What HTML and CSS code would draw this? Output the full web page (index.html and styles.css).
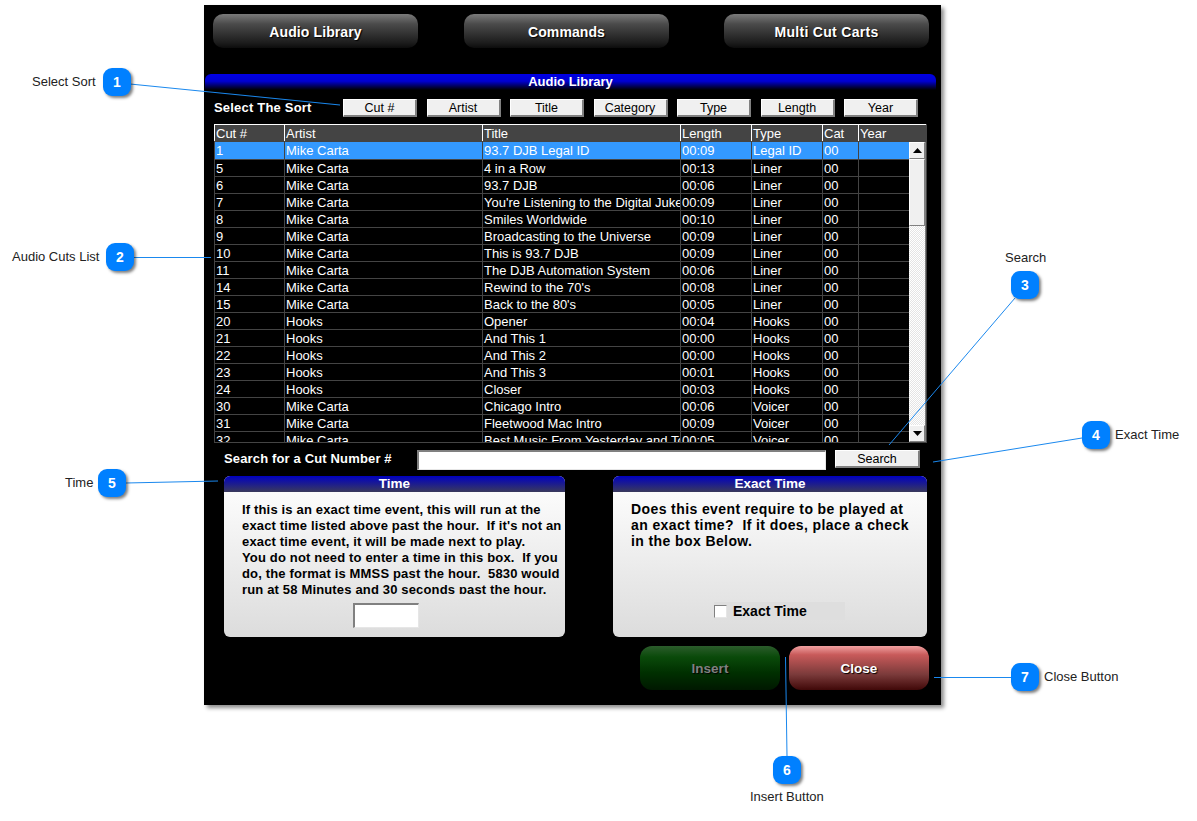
FILE: index.html
```html
<!DOCTYPE html>
<html lang="en">
<head>
<meta charset="utf-8">
<title>Audio Library</title>
<link rel="stylesheet" href="styles.css">
</head>
<body>
<main class="canvas">
  <section class="window">
    <nav class="tabs">
      <button class="gbtn tab">Audio Library</button>
      <button class="gbtn tab">Commands</button>
      <button class="gbtn tab">Multi Cut Carts</button>
    </nav>
    <h2 class="bar">Audio Library</h2>
    <div class="sortrow">
      <span class="sortlabel">Select The Sort</span>
      <div class="sortbtns">
        <button class="wbtn">Cut #</button><button class="wbtn">Artist</button><button class="wbtn">Title</button><button class="wbtn">Category</button><button class="wbtn">Type</button><button class="wbtn">Length</button><button class="wbtn">Year</button>
      </div>
    </div>
    <div class="list">
      <table class="cuts">
        <colgroup><col class="c1"><col class="c2"><col class="c3"><col class="c4"><col class="c5"><col class="c6"><col class="c7"></colgroup>
        <thead><tr><th>Cut #</th><th>Artist</th><th>Title</th><th>Length</th><th>Type</th><th>Cat</th><th>Year</th></tr></thead>
        <tbody>
          <tr class="sel"><td>1</td><td>Mike Carta</td><td>93.7 DJB Legal ID</td><td>00:09</td><td>Legal ID</td><td>00</td><td></td></tr>
          <tr class="r1"><td>5</td><td>Mike Carta</td><td>4 in a Row</td><td>00:13</td><td>Liner</td><td>00</td><td></td></tr>
          <tr><td>6</td><td>Mike Carta</td><td>93.7 DJB</td><td>00:06</td><td>Liner</td><td>00</td><td></td></tr>
          <tr><td>7</td><td>Mike Carta</td><td>You're Listening to the Digital Jukebox</td><td>00:09</td><td>Liner</td><td>00</td><td></td></tr>
          <tr><td>8</td><td>Mike Carta</td><td>Smiles Worldwide</td><td>00:10</td><td>Liner</td><td>00</td><td></td></tr>
          <tr><td>9</td><td>Mike Carta</td><td>Broadcasting to the Universe</td><td>00:09</td><td>Liner</td><td>00</td><td></td></tr>
          <tr><td>10</td><td>Mike Carta</td><td>This is 93.7 DJB</td><td>00:09</td><td>Liner</td><td>00</td><td></td></tr>
          <tr><td>11</td><td>Mike Carta</td><td>The DJB Automation System</td><td>00:06</td><td>Liner</td><td>00</td><td></td></tr>
          <tr><td>14</td><td>Mike Carta</td><td>Rewind to the 70's</td><td>00:08</td><td>Liner</td><td>00</td><td></td></tr>
          <tr><td>15</td><td>Mike Carta</td><td>Back to the 80's</td><td>00:05</td><td>Liner</td><td>00</td><td></td></tr>
          <tr><td>20</td><td>Hooks</td><td>Opener</td><td>00:04</td><td>Hooks</td><td>00</td><td></td></tr>
          <tr><td>21</td><td>Hooks</td><td>And This 1</td><td>00:00</td><td>Hooks</td><td>00</td><td></td></tr>
          <tr><td>22</td><td>Hooks</td><td>And This 2</td><td>00:00</td><td>Hooks</td><td>00</td><td></td></tr>
          <tr><td>23</td><td>Hooks</td><td>And This 3</td><td>00:01</td><td>Hooks</td><td>00</td><td></td></tr>
          <tr><td>24</td><td>Hooks</td><td>Closer</td><td>00:03</td><td>Hooks</td><td>00</td><td></td></tr>
          <tr><td>30</td><td>Mike Carta</td><td>Chicago Intro</td><td>00:06</td><td>Voicer</td><td>00</td><td></td></tr>
          <tr><td>31</td><td>Mike Carta</td><td>Fleetwood Mac Intro</td><td>00:09</td><td>Voicer</td><td>00</td><td></td></tr>
          <tr><td>32</td><td>Mike Carta</td><td>Best Music From Yesterday and Today</td><td>00:05</td><td>Voicer</td><td>00</td><td></td></tr>
        </tbody>
      </table>
      <div class="scrollbar">
        <span class="sb-btn"><svg width="9" height="5" viewBox="0 0 9 5"><path d="M4.5 0 9 5H0z"/></svg></span>
        <span class="sb-thumb"></span>
        <span class="sb-track"></span>
        <span class="sb-btn"><svg width="9" height="5" viewBox="0 0 9 5"><path d="M0 0h9L4.500 5z"/></svg></span>
      </div>
    </div>
    <div class="searchrow">
      <label class="searchlabel">Search for a Cut Number #</label>
      <span class="field searchfield"></span>
      <button class="wbtn searchbtn">Search</button>
    </div>
    <div class="panels">
      <section class="panel timep">
        <h3 class="panelhead">Time</h3>
        <div class="panelbody">
          <p class="timetext">If this is an exact time event, this will run at the exact time listed above past the hour.&nbsp; If it's not an exact time event, it will be made next to play.<br>You do not need to enter a time in this box.&nbsp; If you do, the format is MMSS past the hour.&nbsp; 5830 would run at 58 Minutes and 30 seconds past the hour.</p>
          <span class="field timefield"></span>
        </div>
      </section>
      <section class="panel exactp">
        <h3 class="panelhead">Exact Time</h3>
        <div class="panelbody">
          <p class="exacttext">Does this event require to be played at an exact time?&nbsp; If it does, place a check in the box Below.</p>
          <div class="check"><span class="checkbox"></span><span>Exact Time</span></div>
        </div>
      </section>
    </div>
    <div class="actions">
      <button class="gbtn act insert">Insert</button>
      <button class="gbtn act close">Close</button>
    </div>
  </section>

  <svg class="leaders" width="1197" height="821" viewBox="0 0 1197 821">
    <line x1="130" y1="84" x2="340" y2="105"/>
    <line x1="134" y1="257.500" x2="211" y2="257.500"/>
    <line x1="1015" y1="298" x2="889" y2="445"/>
    <line x1="1082" y1="438" x2="933" y2="462"/>
    <line x1="126" y1="483" x2="218" y2="481"/>
    <line x1="787" y1="756" x2="785.500" y2="657"/>
    <line x1="1011" y1="677.500" x2="934" y2="677.500"/>
  </svg>

  <span class="badge b1">1</span><span class="note n1">Select Sort</span>
  <span class="badge b2">2</span><span class="note n2">Audio Cuts List</span>
  <span class="badge b3">3</span><span class="note n3">Search</span>
  <span class="badge b4">4</span><span class="note n4">Exact Time</span>
  <span class="badge b5">5</span><span class="note n5">Time</span>
  <span class="badge b6">6</span><span class="note n6">Insert Button</span>
  <span class="badge b7">7</span><span class="note n7">Close Button</span>
</main>
</body>
</html>
```
FILE: styles.css
```css
* { box-sizing: border-box; }
html, body { margin: 0; background: #fff; }
body { font-family: "Liberation Sans", Arial, sans-serif; overflow: hidden; }
.canvas { position: relative; width: 1197px; height: 821px; overflow: hidden; }

.window {
  position: absolute; left: 204px; top: 5px; width: 737px; height: 700px;
  background: #000; color: #fff; box-shadow: 3px 3px 4px rgba(0,0,0,.45);
  padding: 9px 12px 0 1px;
}
button { font-family: inherit; cursor: default; }

.gbtn { border: 0; color: #fff; font-weight: 700; font-size: 14px; padding: 1px 0 0; text-shadow: 1px 1px 1px #000; }
.tabs { display: flex; gap: 46px; padding: 0 0 0 8px; height: 34px; }
.tab { width: 205px; height: 34px; border-radius: 10px; background: linear-gradient(#7a7a7a, #4a4a4a 30%, #1c1c1c 85%, #0c0c0c); letter-spacing: .1px; }
.tab:last-child { margin-left: 9px; letter-spacing: .3px; }

.bar {
  margin: 26px 0 0; width: 731px; height: 16px; border-radius: 6px 6px 0 0;
  background: linear-gradient(#0000e6, #0000d0 45%, #000); text-align: center;
  font-size: 13px; line-height: 16px; font-weight: 700; color: #fff;
}
.sortrow { display: flex; align-items: center; margin-top: 9px; height: 18px; padding-left: 9px; }
.sortlabel { font-weight: 700; font-size: 13px; width: 129px; letter-spacing: .2px; line-height: 16px; margin-top: -1px; }
.sortbtns { display: flex; gap: 9.500px; }
.wbtn {
  width: 74px; height: 18px; padding: 0; font-size: 12.500px; line-height: 14px; color: #000;
  background: #f0f0f0; border: 1px solid; border-color: #fff #808080 #808080 #fff;
  border-width: 1px 2px 2px 1px;
}

.list { position: relative; margin: 7px 0 0 9px; width: 713px; height: 319px; overflow: hidden; background: #000; border-right: 1px solid #444; border-bottom: 1px solid #444; }
.cuts { border-collapse: collapse; table-layout: fixed; width: 713px; font-size: 13px; }
.c1 { width: 70px; } .c2 { width: 198px; } .c3 { width: 198px; } .c4 { width: 71px; } .c5 { width: 71px; } .c6 { width: 36px; } .c7 { width: 69px; }
.cuts th { height: 17px; padding: 1px 0 0 1px; background: #444; font-weight: 400; text-align: left; border-top: 1px solid #fff; border-left: 1px solid #fff; border-bottom: 1px solid #444; white-space: nowrap; overflow: hidden; line-height: 14px; }
.cuts td { height: 17px; padding: 0 0 0 1px; border-left: 1px solid #444; border-bottom: 1px solid #444; white-space: nowrap; overflow: hidden; line-height: 15px; }
.cuts .sel td { background: #3399ff; height: 18px; }

.scrollbar { position: absolute; right: 0; top: 18px; bottom: 0; width: 17px; display: flex; flex-direction: column; background: #f3f3f3; border-right: 1px solid #808080; }
.sb-btn { height: 17px; flex: none; background: #f0f0f0; border: 1px solid; border-color: #fff #808080 #808080 #fff; display: flex; align-items: center; justify-content: center; }
.sb-thumb { height: 67px; flex: none; background: #f0f0f0; border: 1px solid; border-color: #fff #808080 #808080 #fff; }
.sb-track { flex: 1; background: repeating-conic-gradient(#fff 0 25%, #e4e4e4 0 50%) 0 0 / 2px 2px; }

.searchrow { display: flex; align-items: flex-start; margin-top: 7px; height: 20px; padding-left: 19px; }
.searchlabel { width: 193px; font-size: 13px; font-weight: 700; line-height: 17px; letter-spacing: .15px; }
.field { display: block; background: #fff; border: 1px solid; border-color: #808080 #e6e6e6 #e6e6e6 #808080; border-width: 2px 1px 1px 2px; }
.searchfield { width: 409px; height: 20px; }
.searchbtn { width: 85px; margin-left: 9px; background: #f0f0f0; }

.panels { display: flex; gap: 48px; padding-left: 19px; margin-top: 6px; height: 161px; }
.panel { border-radius: 6px; overflow: hidden; display: flex; flex-direction: column; background: linear-gradient(#fff, #dcdcdc); color: #000; }
.timep { width: 341px; } .exactp { width: 314px; }
.panelhead { margin: 0; height: 16px; flex: none; background: linear-gradient(#0000c0, #3a3a5c); color: #fff; text-align: center; font-size: 13.500px; line-height: 15px; font-weight: 700; }
.panelbody { flex: 1; display: flex; flex-direction: column; font-weight: 700; font-size: 13px; line-height: 16px; }
.timetext { margin: 10px 0 0 18px; height: 92px; overflow: hidden; width: 323px; font-size: 13px; letter-spacing: .16px; }
.timefield { width: 66px; height: 25px; margin: 9px 0 0 129px; background: #fff; }
.exacttext { margin: 9px 0 0 18px; width: 290px; height: 87px; font-size: 14px; letter-spacing: .4px; }
.check { display: flex; align-items: center; gap: 6px; width: 131px; height: 18px; margin: 14px 0 0 101px; background: #dedede; font-size: 14px; }
.checkbox { width: 13px; height: 13px; background: #fff; border: 1px solid; border-color: #808080 #e6e6e6 #e6e6e6 #808080; }

.actions { display: flex; gap: 9px; padding-left: 435px; margin-top: 9px; }
.act { width: 140px; height: 44px; border-radius: 12px; font-size: 13.500px; }
.insert { background: linear-gradient(#2c5c2c, #0a4a0a 25%, #003000 60%, #001800); color: #808080; }
.close { background: linear-gradient(#f0a0a0, #c85a5a 20%, #7a3a3a 65%, #400808); }

.leaders { position: absolute; left: 0; top: 0; pointer-events: none; }
.leaders line { stroke: #1a88ee; stroke-width: 1; }

.badge {
  position: absolute; width: 28px; height: 28px; border-radius: 9px; background: #0080ff;
  color: #fff; font-size: 14px; font-weight: 700; text-align: center; line-height: 28px;
  box-shadow: 2px 2px 3px rgba(0,0,0,.5);
}
.note { position: absolute; font-size: 13px; line-height: 14px; color: #222; white-space: nowrap; }
.b1 { left: 103px; top: 68px; } .n1 { left: 32px; top: 75px; }
.b2 { left: 106px; top: 243px; } .n2 { left: 12px; top: 250px; }
.b3 { left: 1011px; top: 271px; } .n3 { left: 1005px; top: 251px; }
.b4 { left: 1082px; top: 421px; } .n4 { left: 1115px; top: 428px; }
.b5 { left: 98px; top: 469px; } .n5 { left: 65px; top: 476px; }
.b6 { left: 773px; top: 756px; } .n6 { left: 750px; top: 790px; }
.b7 { left: 1011px; top: 663px; } .n7 { left: 1044px; top: 670px; }
```
